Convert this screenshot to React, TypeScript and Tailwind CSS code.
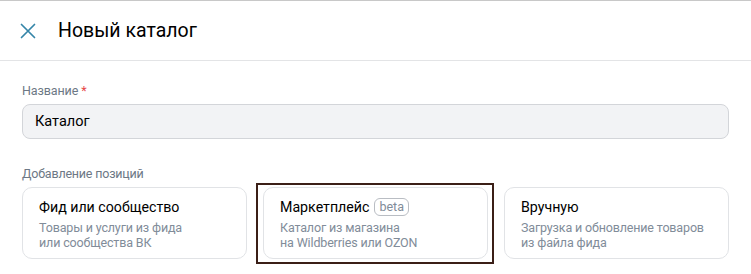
import React from "react";

function Card({
  title,
  lines,
  badge,
  selected,
}: {
  title: string;
  lines: string[];
  badge?: string;
  selected?: boolean;
}) {
  return (
    <div className="relative">
      {selected && (
        <div className="pointer-events-none absolute -left-[7px] -right-[6px] -top-[4px] -bottom-[5px] border-2 border-[#3b1f17]" />
      )}
      <div className="h-[72px] rounded-[10px] border border-[#e1e3e6] bg-white px-4 pt-[9px]">
        <div className="flex items-center gap-[5px] text-[14.2px] leading-5 text-black">
          <span>{title}</span>
          {badge && (
            <span className="flex h-[18px] items-center rounded-[6px] border border-[#b9bdc3] px-[4px] text-[12.5px] leading-none text-[#818c99]">
              {badge}
            </span>
          )}
        </div>
        <div className="mt-[3px] text-[12.5px] leading-[15px] tracking-[-0.15px] text-[#818c99]">
          {lines.map((l) => (
            <div key={l} className="whitespace-nowrap">
              {l}
            </div>
          ))}
        </div>
      </div>
    </div>
  );
}

export default function App() {
  return (
    <div className="h-[274px] w-[751px] overflow-hidden border-t border-[#c8c8c8] bg-white font-['Roboto',sans-serif]">
      <div className="flex h-[60px] items-center border-b border-[#e3e4e6] pl-5">
        <svg width="16" height="16" viewBox="0 0 16 16" className="shrink-0">
          <path
            d="M1.5 1.5 L14.5 14.5 M14.5 1.5 L1.5 14.5"
            stroke="#3585a8"
            strokeWidth="1.7"
            strokeLinecap="round"
          />
        </svg>
        <div className="ml-[22px] text-[19.5px] leading-6 text-black">Новый каталог</div>
      </div>
      <div className="px-[22px] pt-[22px]">
        <div className="text-[12.5px] leading-4 tracking-[-0.1px] text-[#6d7885]">
          Название <span className="text-[#e64646]">*</span>
        </div>
        <div className="mt-[5px] flex h-[35px] w-[707px] items-center rounded-[8px] border border-[#d3d5d9] bg-[#f2f3f5] px-3 text-[14.5px] text-black">
          Каталог
        </div>
        <div className="mt-[27px] text-[12.5px] leading-4 tracking-[-0.2px] text-[#6d7885]">
          Добавление позиций
        </div>
        <div className="mt-[5px] grid w-[707px] grid-cols-3 gap-4">
          <Card title="Фид или сообщество" lines={["Товары и услуги из фида", "или сообщества ВК"]} />
          <Card
            title="Маркетплейс"
            badge="beta"
            selected
            lines={["Каталог из магазина", "на Wildberries или OZON"]}
          />
          <Card title="Вручную" lines={["Загрузка и обновление товаров", "из файла фида"]} />
        </div>
      </div>
    </div>
  );
}
